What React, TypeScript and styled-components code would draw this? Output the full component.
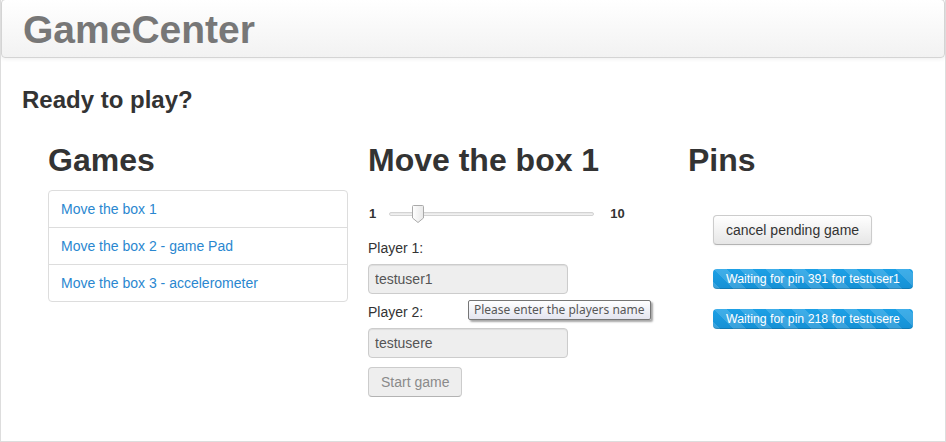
import React from 'react';
import styled, { createGlobalStyle } from 'styled-components';

const GlobalStyle = createGlobalStyle`
    html, body {
        margin: 0;
        padding: 0;
        background: #ffffff;
    }
    body {
        font-family: "Liberation Sans", Arial, sans-serif;
        font-size: 14px;
        line-height: 20px;
        color: #333333;
    }
`;

const games = [
    'Move the box 1',
    'Move the box 2 - game Pad',
    'Move the box 3 - accelerometer',
];

const pins = [
    { pin: 391, user: 'testuser1' },
    { pin: 218, user: 'testusere' },
];

const App = () => {
    return (
        <Page>
            <GlobalStyle />
            <NavBar>
                <Brand>GameCenter</Brand>
            </NavBar>
            <Content>
                <Lead>Ready to play?</Lead>
                <Columns>
                    <Column>
                        <ColumnTitle>Games</ColumnTitle>
                        <GameList>
                            {games.map((g) => (
                                <GameItem key={g}>
                                    <GameLink href="#">{g}</GameLink>
                                </GameItem>
                            ))}
                        </GameList>
                    </Column>

                    <Column>
                        <ColumnTitle>Move the box 1</ColumnTitle>
                        <SliderRow>
                            <SliderValue>1</SliderValue>
                            <SliderTrack>
                                <SliderThumb>
                                    <svg width="12" height="18" viewBox="0 0 12 18">
                                        <defs>
                                            <linearGradient id="thumbFill" x1="0" y1="0" x2="1" y2="0">
                                                <stop offset="0" stopColor="#ffffff" />
                                                <stop offset="1" stopColor="#e8e8e8" />
                                            </linearGradient>
                                        </defs>
                                        <path
                                            d="M1.5 0.5 H10.5 Q11.5 0.5 11.5 1.5 V13 L6 17.5 L0.5 13 V1.5 Q0.5 0.5 1.5 0.5 Z"
                                            fill="url(#thumbFill)"
                                            stroke="#aaaaaa"
                                            strokeWidth="1"
                                        />
                                    </svg>
                                </SliderThumb>
                            </SliderTrack>
                            <SliderValue>10</SliderValue>
                        </SliderRow>

                        <FieldLabel>Player 1:</FieldLabel>
                        <FieldWrap>
                            <TextInput defaultValue="testuser1" readOnly />
                            <Tooltip>Please enter the players name</Tooltip>
                        </FieldWrap>
                        <FieldLabel>Player 2:</FieldLabel>
                        <FieldWrap>
                            <TextInput defaultValue="testusere" readOnly />
                        </FieldWrap>
                        <StartButton disabled>Start game</StartButton>
                    </Column>

                    <Column>
                        <ColumnTitle>Pins</ColumnTitle>
                        <PinsBody>
                            <Button>cancel pending game</Button>
                            <PinBars>
                                {pins.map((p) => (
                                    <ProgressBar key={p.pin}>
                                        Waiting for pin {p.pin} for {p.user}
                                    </ProgressBar>
                                ))}
                            </PinBars>
                        </PinsBody>
                    </Column>
                </Columns>
            </Content>
        </Page>
    );
};

const Page = styled.div`
    width: 946px;
    height: 442px;
    box-sizing: border-box;
    border: 1px solid #dddddd;
    border-top: none;
    overflow: hidden;
`;

const NavBar = styled.div`
    height: 59px;
    box-sizing: border-box;
    margin-top: -1px;
    display: flex;
    align-items: center;
    padding: 0 21px;
    background-image: linear-gradient(to bottom, #ffffff, #f2f2f2);
    border: 1px solid #d4d4d4;
    border-radius: 4px;
    box-shadow: 0 1px 4px rgba(0, 0, 0, 0.065);
`;

const Brand = styled.span`
    font-size: 39px;
    font-weight: bold;
    line-height: 44px;
    color: #777777;
    margin-top: 2px;
`;

const Content = styled.div`
    padding: 0 21px;
`;

const Lead = styled.h3`
    margin: 27px 0 25px 0;
    font-size: 24px;
    line-height: 30px;
    font-weight: bold;
    color: #333333;
`;

const Columns = styled.div`
    display: grid;
    grid-template-columns: 300px 300px 300px;
    column-gap: 20px;
    padding-left: 26px;
`;

const Column = styled.div`
    display: flex;
    flex-direction: column;
    align-items: flex-start;
`;

const ColumnTitle = styled.h1`
    margin: 0 0 10px 0;
    font-size: 32px;
    line-height: 40px;
    font-weight: bold;
    color: #333333;
`;

const GameList = styled.ul`
    list-style: none;
    margin: 0;
    padding: 0;
    width: 300px;
    box-sizing: border-box;
    border: 1px solid #dddddd;
    border-radius: 4px;
`;

const GameItem = styled.li`
    border-top: 1px solid #dddddd;
    &:first-child {
        border-top: none;
    }
`;

const GameLink = styled.a`
    display: block;
    padding: 8px 12px;
    color: #2a87d0;
    text-decoration: none;
`;

const SliderRow = styled.div`
    display: flex;
    align-items: center;
    height: 20px;
    margin: 14px 0 14px 0;
`;

const SliderValue = styled.span`
    font-size: 13px;
    font-weight: bold;
    color: #333333;
    margin-left: 1px;
`;

const SliderTrack = styled.div`
    position: relative;
    width: 205px;
    height: 4px;
    margin: 0 15px 0 13px;
    border: 1px solid #d3d3d3;
    border-radius: 2px;
    box-sizing: border-box;
    background-image: linear-gradient(to bottom, #e6e6e6, #f4f4f4);
`;

const SliderThumb = styled.div`
    position: absolute;
    left: 22px;
    top: -8px;
    width: 12px;
    height: 18px;
    line-height: 0;
`;

const FieldLabel = styled.label`
    display: block;
    margin-bottom: 6px;
    color: #333333;
`;

const FieldWrap = styled.div`
    position: relative;
    margin-bottom: 8px;
`;

const TextInput = styled.input`
    display: block;
    width: 200px;
    height: 30px;
    box-sizing: border-box;
    padding: 4px 6px;
    font-family: "Liberation Sans", Arial, sans-serif;
    font-size: 14px;
    color: #555555;
    background: #eeeeee;
    border: 1px solid #cccccc;
    border-radius: 4px;
    box-shadow: inset 0 1px 1px rgba(0, 0, 0, 0.075);
    outline: none;
`;

const Tooltip = styled.div`
    position: absolute;
    left: 100px;
    top: 36px;
    padding: 0 5px;
    height: 18px;
    line-height: 17px;
    white-space: nowrap;
    font-family: "Noto Sans", "DejaVu Sans", sans-serif;
    font-size: 12px;
    color: #575757;
    background-image: linear-gradient(to bottom, #ffffff, #e4e5f0);
    border: 1px solid #767676;
    border-radius: 2px;
    box-shadow: 2px 2px 2px rgba(0, 0, 0, 0.35);
`;

const Button = styled.button`
    height: 30px;
    box-sizing: border-box;
    padding: 0 12px;
    font-family: "Liberation Sans", Arial, sans-serif;
    font-size: 14px;
    color: #333333;
    background-image: linear-gradient(to bottom, #ffffff, #e6e6e6);
    border: 1px solid #cccccc;
    border-bottom-color: #b3b3b3;
    border-radius: 4px;
    box-shadow: inset 0 1px 0 rgba(255, 255, 255, 0.2), 0 1px 2px rgba(0, 0, 0, 0.05);
    &:disabled {
        color: #8a8a8a;
        background-image: none;
        background-color: #eeeeee;
        box-shadow: none;
    }
`;

const StartButton = styled(Button)`
    margin-top: 1px;
`;

const PinsBody = styled.div`
    display: flex;
    flex-direction: column;
    align-items: flex-start;
    margin: 25px 0 0 25px;
`;

const PinBars = styled.div`
    display: flex;
    flex-direction: column;
    gap: 20px;
    margin-top: 24px;
`;

const ProgressBar = styled.div`
    width: 200px;
    height: 20px;
    line-height: 20px;
    text-align: center;
    font-size: 12.3px;
    color: #ffffff;
    border-radius: 4px;
    background-color: #1b9be0;
    background-image: linear-gradient(
        45deg,
        rgba(255, 255, 255, 0.15) 25%,
        transparent 25%,
        transparent 50%,
        rgba(255, 255, 255, 0.15) 50%,
        rgba(255, 255, 255, 0.15) 75%,
        transparent 75%,
        transparent
    ), linear-gradient(to bottom, #1ca0e6, #1590d4);
    background-size: 26px 26px, 100% 100%;
    box-shadow: inset 0 -1px 0 rgba(0, 0, 0, 0.15);
`;

export default App;
